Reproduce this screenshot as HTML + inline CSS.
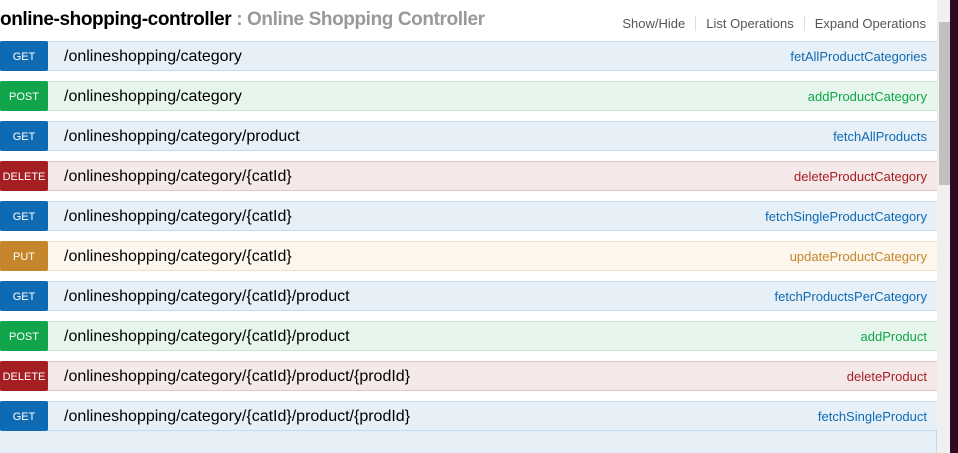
<!DOCTYPE html>
<html><head><style>
body{margin:0;width:958px;height:453px;overflow:hidden;background:#fff;font-family:"Liberation Sans",sans-serif;position:relative}
.title{position:absolute;left:0;top:9px;font-size:19px;font-weight:bold;color:#000;letter-spacing:-0.4px}
.title span{color:#999}
.links{position:absolute;top:16px;right:32px;font-size:13px;color:#555}
.links span{padding:0 10px;border-right:1px solid #ddd}
.links span:last-child{border:none;padding-right:0}
.row{position:absolute;left:0;width:937px;height:28px;border:1px solid;box-sizing:content-box}
.b{position:absolute;left:-1px;top:-1px;width:48px;height:30px;border-radius:2px;color:#fff;font-size:11px;text-align:center;line-height:32px}
.p{position:absolute;left:63px;top:6px;font-size:16px;color:#000}
.s{position:absolute;right:11px;top:7px;font-size:13px}
.get{background:#e7f0f7;border-color:#c3d9ec}.get .b{background:#0f6ab4}.get .s{color:#0f6ab4}
.post{background:#e7f6ec;border-color:#c3e8d1}.post .b{background:#10a54a}.post .s{color:#10a54a}
.del{background:#f5e8e8;border-color:#e8c6c7}.del .b{background:#a41e22}.del .s{color:#a41e22}
.put{background:#fcf6ed;border-color:#f0e0ca}.put .b{background:#c5862b}.put .s{color:#c5862b}
.sb{position:absolute;left:937px;top:0;width:13px;height:453px;background:#f0f0f0}
.th{position:absolute;left:939px;top:22px;width:11px;height:163px;background:#c1c1c1}
.dk{position:absolute;left:950px;top:0;width:8px;height:453px;background:#300a24}
.exp{position:absolute;left:0;top:431px;width:936px;height:22px;background:#e7f0f7;border-right:1px solid #c3d9ec}
</style></head><body>
<div class="title">online-shopping-controller <span>: Online Shopping Controller</span></div>
<div class="links"><span>Show/Hide</span><span>List Operations</span><span>Expand Operations</span></div>
<div class="row get" style="top:41px"><div class="b">GET</div><div class="p">/onlineshopping/category</div><div class="s">fetAllProductCategories</div></div>
<div class="row post" style="top:81px"><div class="b">POST</div><div class="p">/onlineshopping/category</div><div class="s">addProductCategory</div></div>
<div class="row get" style="top:121px"><div class="b">GET</div><div class="p">/onlineshopping/category/product</div><div class="s">fetchAllProducts</div></div>
<div class="row del" style="top:161px"><div class="b">DELETE</div><div class="p">/onlineshopping/category/{catId}</div><div class="s">deleteProductCategory</div></div>
<div class="row get" style="top:201px"><div class="b">GET</div><div class="p">/onlineshopping/category/{catId}</div><div class="s">fetchSingleProductCategory</div></div>
<div class="row put" style="top:241px"><div class="b">PUT</div><div class="p">/onlineshopping/category/{catId}</div><div class="s">updateProductCategory</div></div>
<div class="row get" style="top:281px"><div class="b">GET</div><div class="p">/onlineshopping/category/{catId}/product</div><div class="s">fetchProductsPerCategory</div></div>
<div class="row post" style="top:321px"><div class="b">POST</div><div class="p">/onlineshopping/category/{catId}/product</div><div class="s">addProduct</div></div>
<div class="row del" style="top:361px"><div class="b">DELETE</div><div class="p">/onlineshopping/category/{catId}/product/{prodId}</div><div class="s">deleteProduct</div></div>
<div class="row get" style="top:401px"><div class="b">GET</div><div class="p">/onlineshopping/category/{catId}/product/{prodId}</div><div class="s">fetchSingleProduct</div></div>
<div class="exp"></div>
<div class="sb"></div><div class="th"></div><div class="dk"></div>
</body></html>
